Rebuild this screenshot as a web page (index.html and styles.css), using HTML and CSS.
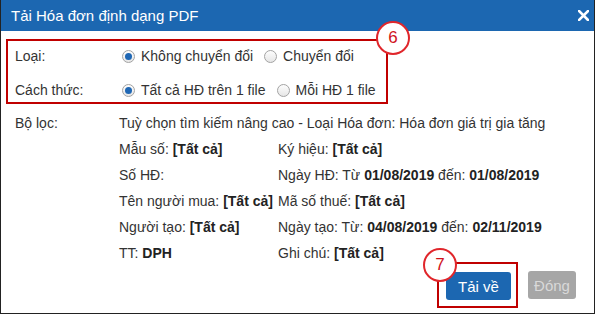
FILE: index.html
```html
<!DOCTYPE html>
<html lang="vi">
<head>
  <meta charset="UTF-8" />
  <meta name="viewport" content="width=device-width, initial-scale=1.0"/>
  <title>Tải Hóa đơn định dạng PDF</title>
  <link rel="stylesheet" href="styles.css">
</head>
<body>
  <div class="dialog">
    <div class="titlebar">
      <span class="title">Tải Hóa đơn định dạng PDF</span>
      <svg class="close" width="11" height="11" viewBox="0 0 11 11">
        <path d="M1 1 L10 10 M10 1 L1 10" stroke="#fff" stroke-width="2.6" stroke-linecap="square"/>
      </svg>
    </div>

    <div class="content">
      <div class="options">
        <div class="row row-first">
          <span class="label">Loại:</span>
          <span class="radio checked"></span><span class="opt">Không chuyển đổi</span>
          <span class="radio"></span><span class="opt">Chuyển đổi</span>
        </div>
        <div class="row">
          <span class="label">Cách thức:</span>
          <span class="radio checked"></span><span class="opt">Tất cả HĐ trên 1 file</span>
          <span class="radio"></span><span class="opt">Mỗi HĐ 1 file</span>
        </div>
        <span class="step step-6">6</span>
      </div>

      <div class="filter">
        <span class="label">Bộ lọc:</span>
        <div class="filter-grid">
          <div class="wide">Tuỳ chọn tìm kiếm nâng cao - Loại Hóa đơn: Hóa đơn giá trị gia tăng</div>
          <div>Mẫu số: <b>[Tất cả]</b></div>
          <div>Ký hiệu: <b>[Tất cả]</b></div>
          <div>Số HĐ:</div>
          <div>Ngày HĐ: Từ <b>01/08/2019</b> đến: <b>01/08/2019</b></div>
          <div>Tên người mua: <b>[Tất cả]</b></div>
          <div>Mã số thuế: <b>[Tất cả]</b></div>
          <div>Người tạo: <b>[Tất cả]</b></div>
          <div>Ngày tạo: Từ: <b>04/08/2019</b> đến: <b>02/11/2019</b></div>
          <div>TT: <b>DPH</b></div>
          <div>Ghi chú: <b>[Tất cả]</b></div>
        </div>
      </div>

      <div class="footer">
        <div class="highlight">
          <button class="btn btn-primary">Tải về</button>
          <span class="step step-7">7</span>
        </div>
        <button class="btn btn-disabled">Đóng</button>
      </div>
    </div>
  </div>
</body>
</html>
```

FILE: styles.css
```css
body {
  margin: 0;
  font-family: "Liberation Sans", Arial, sans-serif;
  font-size: 14px;
  color: #333;
  background: white;
}
.dialog {
  width: 595px;
  height: 314px;
  border-left: 1px solid #222;
  border-right: 1px solid #222;
  border-bottom: 1px solid #222;
  box-sizing: border-box;
  position: relative;
}
.titlebar {
  height: 31px;
  background: #1c67b1;
  color: white;
  display: flex;
  align-items: center;
  justify-content: space-between;
  padding: 0 5px 0 10px;
}
.title {
  font-size: 15px;
  margin-top: -1px;
}
.close {
  margin-top: -1px;
}
.content {
  padding: 8px 0 0 5px;
}
.options {
  position: relative;
  width: 382px;
  border: 2px solid #c00000;
  padding: 6px 0 3px 7px;
  box-sizing: border-box;
  height: 65px;
  white-space: nowrap;
}
.row {
  display: flex;
  align-items: center;
  height: 18px;
  line-height: 18px;
  margin-top: 16px;
}
.row-first {
  margin-top: 0;
}
.label {
  width: 107px;
  flex-shrink: 0;
}
.radio {
  width: 11px;
  height: 11px;
  border: 1px solid #a3a3a3;
  border-radius: 50%;
  background: linear-gradient(#fdfdfd, #e6e6e6);
  position: relative;
  flex-shrink: 0;
}
.radio.checked::after {
  content: "";
  position: absolute;
  left: 2px;
  top: 2px;
  width: 7px;
  height: 7px;
  border-radius: 50%;
  background: #1f67b4;
}
.opt {
  margin-left: 6px;
  margin-right: 11px;
}
.step {
  position: absolute;
  width: 30px;
  height: 30px;
  border: 2px solid #e0262b;
  border-radius: 50%;
  background: white;
  color: #d0121b;
  font-size: 17px;
  line-height: 30px;
  text-align: center;
}
.step-6 {
  right: -24px;
  top: -20px;
}
.step-7 {
  left: -16px;
  top: -16px;
}
.filter {
  display: flex;
  margin-top: 10px;
  padding-left: 9px;
  line-height: 18px;
}
.filter .label {
  width: 104px;
}
.filter-grid {
  display: grid;
  grid-template-columns: 159px auto;
  row-gap: 8px;
}
.filter-grid .wide {
  grid-column: 1 / 3;
}
.filter-grid b {
  color: #222;
}
.footer {
  display: flex;
  justify-content: flex-end;
  align-items: center;
  padding-right: 18px;
}
.highlight {
  position: relative;
  border: 2px solid #c00000;
  padding: 8px 5px 6px 7px;
  margin-right: 10px;
  display: flex;
}
.btn {
  border: none;
  border-radius: 3px;
  height: 28px;
  font-family: "Liberation Sans", Arial, sans-serif;
  font-size: 15px;
  padding: 0;
}
.btn-primary {
  width: 65px;
  background: #1c67b1;
  color: white;
}
.btn-disabled {
  width: 48px;
  background: #a6a6a6;
  color: #d9d9d9;
}
```
